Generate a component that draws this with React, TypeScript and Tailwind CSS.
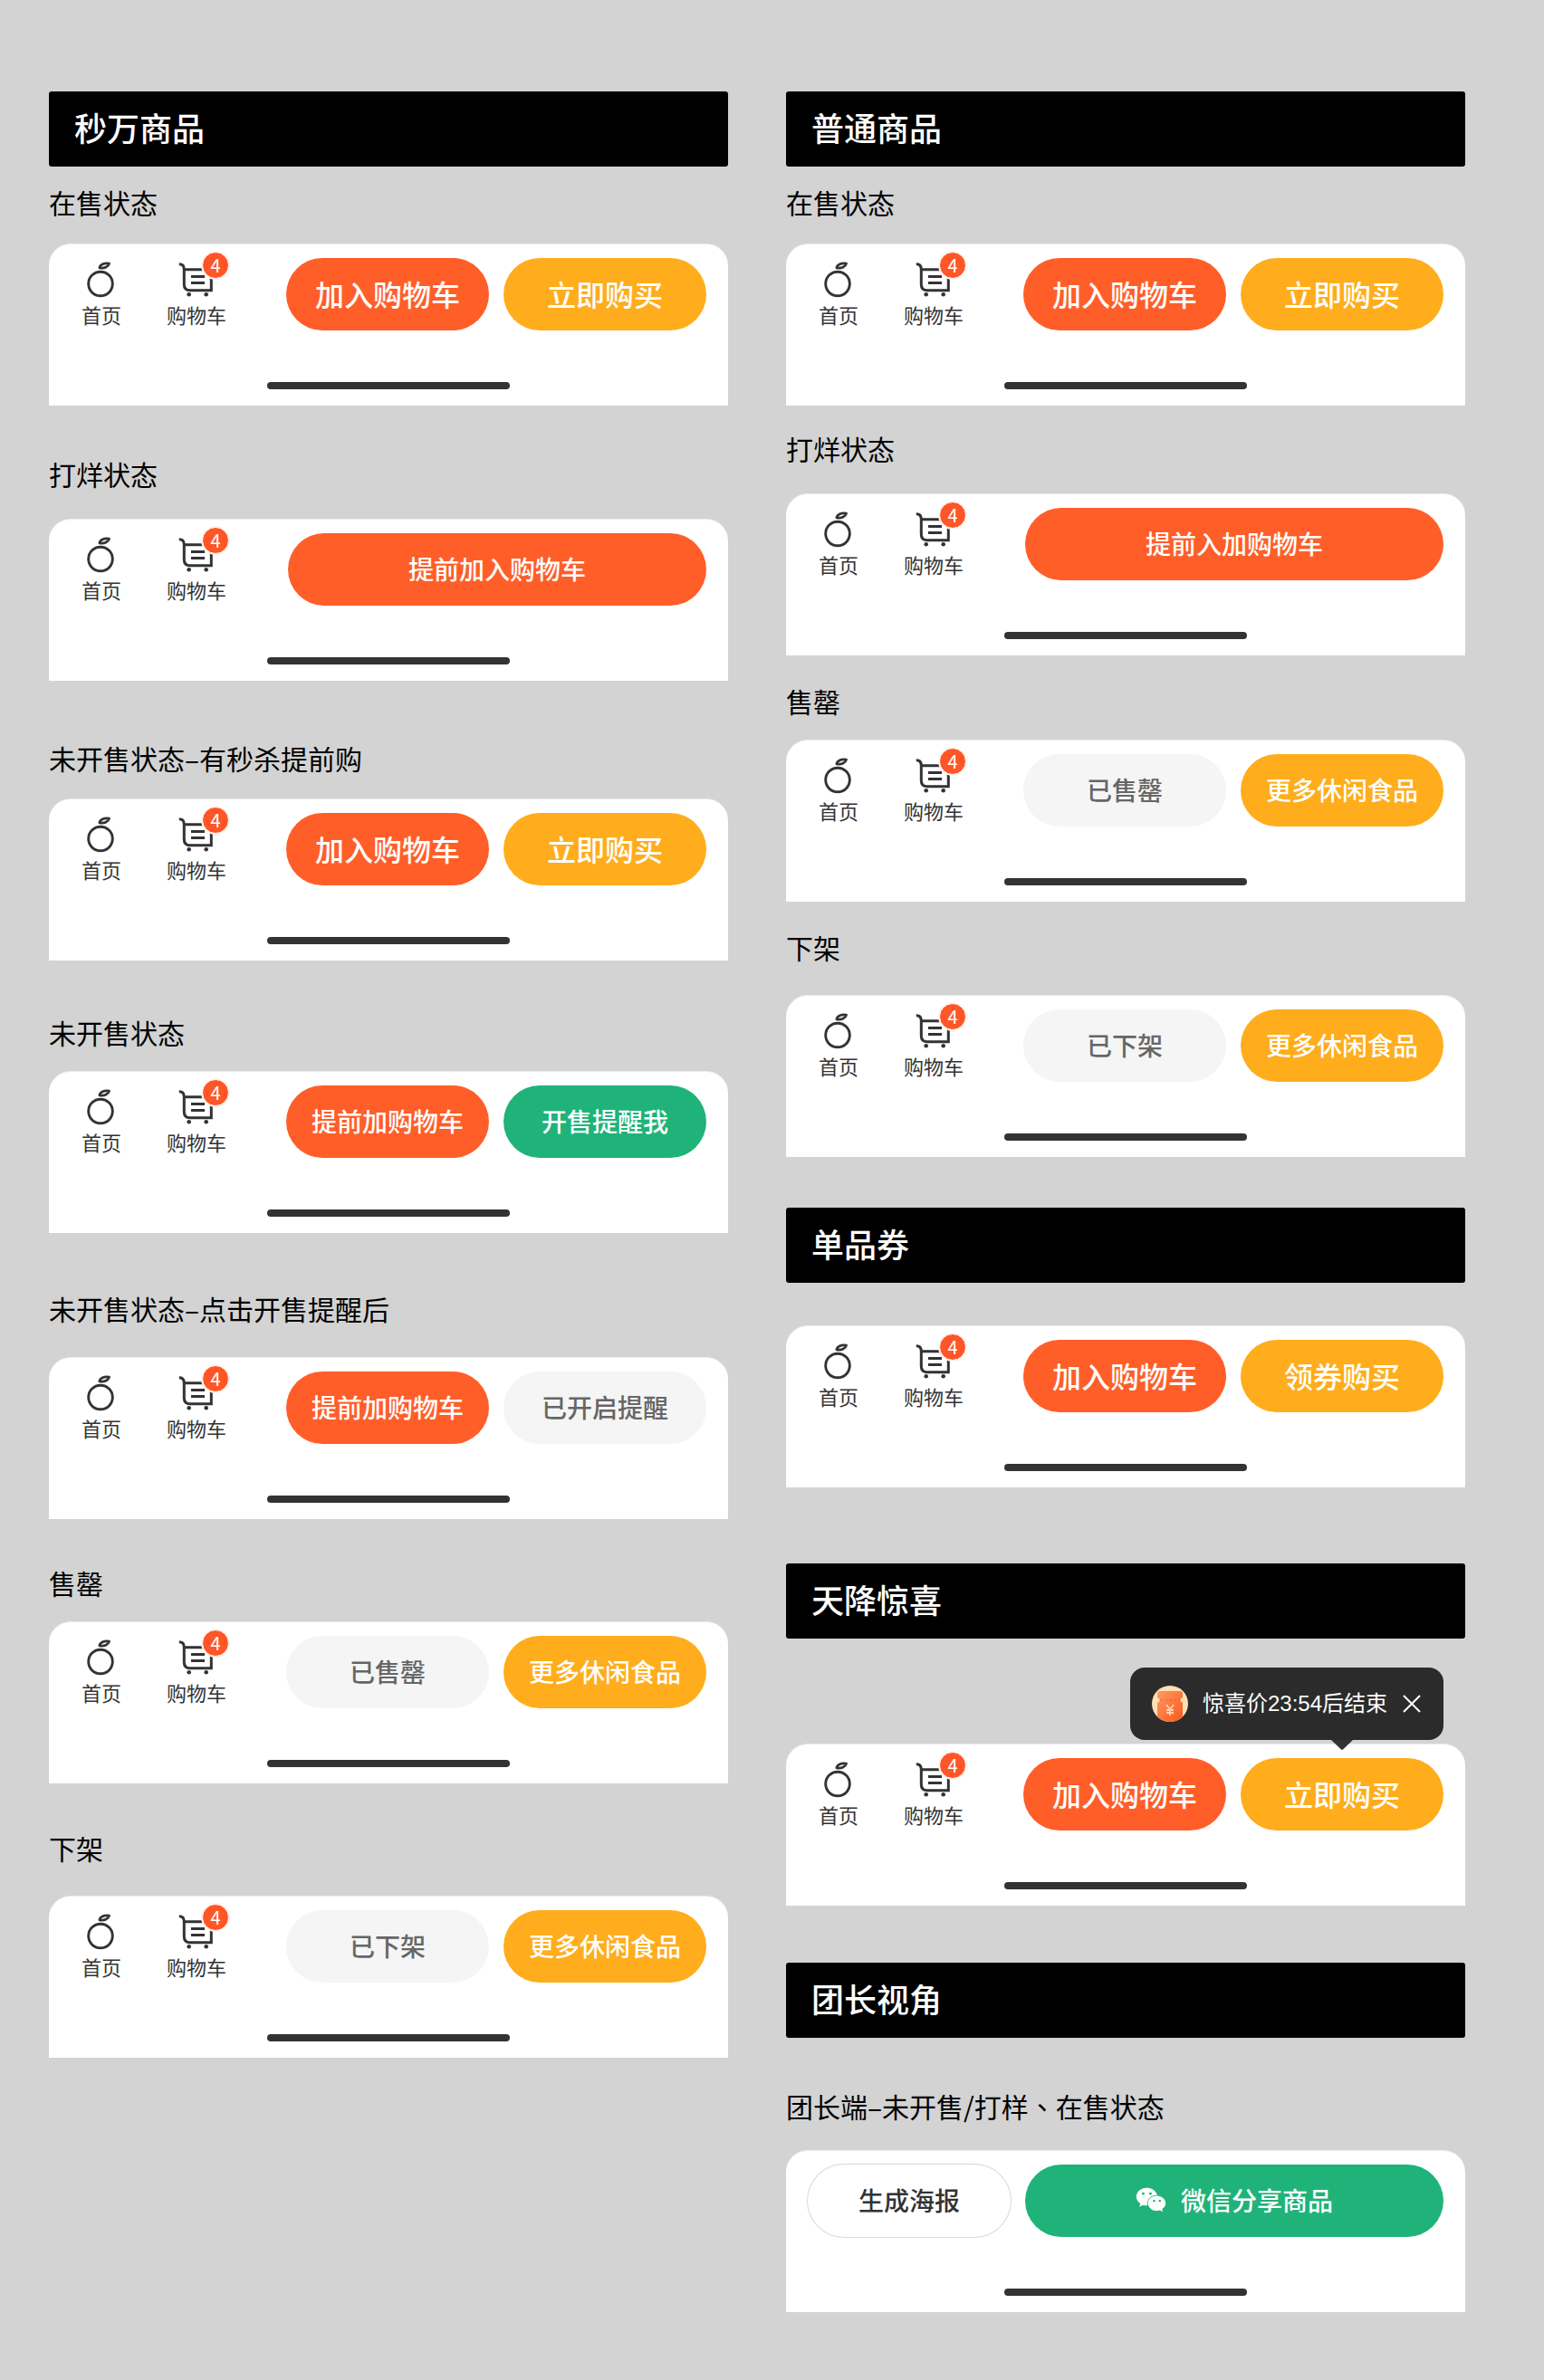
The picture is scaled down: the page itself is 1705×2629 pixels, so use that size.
import type { ReactNode } from "react";
import { FaWeixin } from "react-icons/fa6";

type Tone = "orange" | "amber" | "green" | "muted";

const toneClass: Record<Tone, string> = {
  orange: "bg-[#ff5e29] text-white",
  amber: "bg-[#ffad1c] text-white",
  green: "bg-[#1fb379] text-white",
  muted: "bg-[#f5f5f5] text-[#666666]",
};

function OrangeIcon() {
  return (
    <svg className="overflow-visible" width="40" height="40" viewBox="0 0 40 40" fill="none" stroke="#333" aria-hidden="true">
      <circle cx="19" cy="26.5" r="13.3" strokeWidth="2.9" />
      <path d="M17.8 8.8C18.6 5.2 23 3.2 28.6 4.2C27.6 7.8 23.2 9.8 17.8 8.8Z" strokeWidth="2.7" strokeLinejoin="round" />
    </svg>
  );
}

function CartIcon() {
  return (
    <svg className="overflow-visible" width="44" height="40" viewBox="0 0 44 40" fill="none" stroke="#333" aria-hidden="true">
      <path d="M2.8 4.8C6.6 4.8 8.3 6.8 8.3 10.7V27.2Q8.3 33.7 14.8 33.7H38.3V10.7H8.3" strokeWidth="3" />
      <path d="M16 18.6H31M16 25.5H31" strokeWidth="3" />
      <circle cx="13.7" cy="38.2" r="2.3" fill="#333" stroke="none" />
      <circle cx="32.7" cy="38.2" r="2.3" fill="#333" stroke="none" />
    </svg>
  );
}

function CouponIcon() {
  return (
    <svg width="40" height="40" viewBox="0 0 40 40" aria-hidden="true">
      <defs>
        <linearGradient id="coupon" x1="0" y1="0" x2="1" y2="1">
          <stop offset="0" stopColor="#ff9a62" />
          <stop offset="1" stopColor="#f9581b" />
        </linearGradient>
        <clipPath id="coin">
          <circle cx="20" cy="20" r="20" />
        </clipPath>
      </defs>
      <g clipPath="url(#coin)">
        <rect width="40" height="40" fill="#ffdfb5" />
        <path
          d="M9 6H31Q34 6 34 9V13.5A2.5 2.5 0 0 0 34 18.5V40H6V18.5A2.5 2.5 0 0 0 6 13.5V9Q6 6 9 6Z"
          fill="url(#coupon)"
        />
        <path d="M9 16H31" stroke="#e8622f" strokeWidth="1" strokeDasharray="3 2" />
        <path d="M16 21L20 26.5L24 21M20 26.5V33M16 27H24M16 30H24" fill="none" stroke="#ffcfae" strokeWidth="1.8" />
      </g>
    </svg>
  );
}

function Header({ children, className }: { children: ReactNode; className?: string }) {
  return (
    <h2 className={`rounded-[3px] bg-black px-7 pt-3.5 pb-[18px] text-[36px] leading-[51px] font-medium text-white ${className ?? ""}`}>
      {children}
    </h2>
  );
}

function Label({ children, className }: { children: ReactNode; className: string }) {
  return <h3 className={`pb-1 text-[30px] leading-9 font-normal text-black ${className}`}>{children}</h3>;
}

function Pill({ tone, large, children }: { tone: Tone; large?: boolean; children: ReactNode }) {
  return (
    <button
      type="button"
      className={`flex h-20 flex-1 items-center justify-center gap-4 rounded-full pb-0.5 font-medium whitespace-nowrap ${
        large ? "text-[32px]" : "text-[28px]"
      } ${toneClass[tone]}`}
    >
      {children}
    </button>
  );
}

function Sheet({ children, className }: { children: ReactNode; className: string }) {
  return (
    <div className={`relative rounded-t-3xl border-t border-[#ececf2] bg-white pt-[15px] pb-[18px] ${className}`}>
      {children}
      <div className="mx-auto mt-[57px] h-2 w-[268px] rounded-full bg-[#333333]" />
    </div>
  );
}

function Bar({ children, wide, className, overlay }: { children: ReactNode; wide?: boolean; className: string; overlay?: ReactNode }) {
  return (
    <Sheet className={className}>
      <div className="flex items-center pr-6 pl-9">
        <nav className="flex gap-[50px] pb-0.5 text-[22px] leading-7 text-[#333333]">
          <a href="#home" className="flex w-11 flex-col items-center gap-1.5">
            <OrangeIcon />
            首页
          </a>
          <a href="#cart" className="flex w-[66px] flex-col items-center gap-1.5">
            <span className="relative">
              <CartIcon />
              <span className="absolute -top-[9px] left-7 flex size-[30px] items-center justify-center rounded-full border border-white bg-[#ff5627] text-xl leading-none text-white ring-1 ring-[#fff3ef]">
                4
              </span>
            </span>
            购物车
          </a>
        </nav>
        <div className={`flex flex-1 gap-4 ${wide ? "ml-[68px]" : "ml-[66px]"}`}>{children}</div>
      </div>
      {overlay}
    </Sheet>
  );
}

function SurpriseTip() {
  return (
    <div
      role="status"
      className="absolute -top-[85px] right-6 flex h-20 items-center gap-4 rounded-2xl bg-[#2b2b2b] px-6 font-['Liberation_Sans','Noto_Sans_CJK_SC',sans-serif] text-2xl whitespace-nowrap text-white"
    >
      <CouponIcon />
      惊喜价23:54后结束
      <button type="button" aria-label="关闭">
        <svg width="22" height="22" viewBox="0 0 22 22" fill="none" stroke="#fff" strokeWidth="2" aria-hidden="true">
          <path d="M2 2L20 20M20 2L2 20" />
        </svg>
      </button>
      <svg className="absolute top-20 right-[100px]" width="24" height="11" viewBox="0 0 24 11" fill="#333" aria-hidden="true">
        <path d="M0 0H24L13 10.4Q12 11.2 11 10.4Z" />
      </svg>
    </div>
  );
}

function CartAndBuy({ buy = "立即购买" }: { buy?: string }) {
  return (
    <>
      <Pill tone="orange" large>加入购物车</Pill>
      <Pill tone="amber" large>{buy}</Pill>
    </>
  );
}

function Unavailable({ text }: { text: string }) {
  return (
    <>
      <Pill tone="muted">{text}</Pill>
      <Pill tone="amber">更多休闲食品</Pill>
    </>
  );
}

export default function App() {
  return (
    <main
      lang="zh-CN"
      className="grid min-h-screen grid-cols-2 items-start gap-16 bg-[#d3d3d3] pt-[101px] pr-[87px] pb-[75px] pl-[54px] font-['Noto_Sans_CJK_SC',sans-serif]"
    >
      <section>
        <Header>秒万商品</Header>
        <Label className="mt-[21px]">在售状态</Label>
        <Bar className="mt-6">
          <CartAndBuy />
        </Bar>

        <Label className="mt-[57px]">打烊状态</Label>
        <Bar className="mt-7" wide>
          <Pill tone="orange">提前加入购物车</Pill>
        </Bar>

        <Label className="mt-[67px]">未开售状态–有秒杀提前购</Label>
        <Bar className="mt-[23px]">
          <CartAndBuy />
        </Bar>

        <Label className="mt-[61px]">未开售状态</Label>
        <Bar className="mt-[21px]">
          <Pill tone="orange">提前加购物车</Pill>
          <Pill tone="green">开售提醒我</Pill>
        </Bar>

        <Label className="mt-[65px]">未开售状态–点击开售提醒后</Label>
        <Bar className="mt-8">
          <Pill tone="orange">提前加购物车</Pill>
          <Pill tone="muted">已开启提醒</Pill>
        </Bar>

        <Label className="mt-[52px]">售罄</Label>
        <Bar className="mt-[21px]">
          <Unavailable text="已售罄" />
        </Bar>

        <Label className="mt-[53px]">下架</Label>
        <Bar className="mt-[31px]">
          <Unavailable text="已下架" />
        </Bar>
      </section>

      <section>
        <Header className="font-['Noto_Sans_CJK_TC',sans-serif]">普通商品</Header>
        <Label className="mt-[21px]">在售状态</Label>
        <Bar className="mt-6">
          <CartAndBuy />
        </Bar>

        <Label className="mt-[29px]">打烊状态</Label>
        <Bar className="mt-7" wide>
          <Pill tone="orange">提前入加购物车</Pill>
        </Bar>

        <Label className="mt-8">售罄</Label>
        <Bar className="mt-[21px]">
          <Unavailable text="已售罄" />
        </Bar>

        <Label className="mt-8">下架</Label>
        <Bar className="mt-[31px]">
          <Unavailable text="已下架" />
        </Bar>

        <Header className="mt-14">单品券</Header>
        <Bar className="mt-[47px]">
          <CartAndBuy buy="领券购买" />
        </Bar>

        <Header className="mt-[84px]">天降惊喜</Header>
        <Bar className="mt-[116px]" overlay={<SurpriseTip />}>
          <CartAndBuy />
        </Bar>

        <Header className="mt-[63px]">团长视角</Header>
        <Label className="mt-[57px]">
          团长端–未开售/打样
          <span lang="zh-TW" className="font-['Noto_Sans_CJK_TC',sans-serif]">、</span>
          在售状态
        </Label>
        <Sheet className="mt-[27px]">
          <div className="flex gap-4 px-6">
            <button
              type="button"
              className="h-20 w-[224px] rounded-full bg-white pb-0.5 text-[28px] font-medium text-[#333333] ring-1 ring-[#d9d9d9]"
            >
              生成海报
            </button>
            <Pill tone="green">
              <FaWeixin className="size-[34px]" aria-hidden="true" />
              微信分享商品
            </Pill>
          </div>
        </Sheet>
      </section>
    </main>
  );
}
